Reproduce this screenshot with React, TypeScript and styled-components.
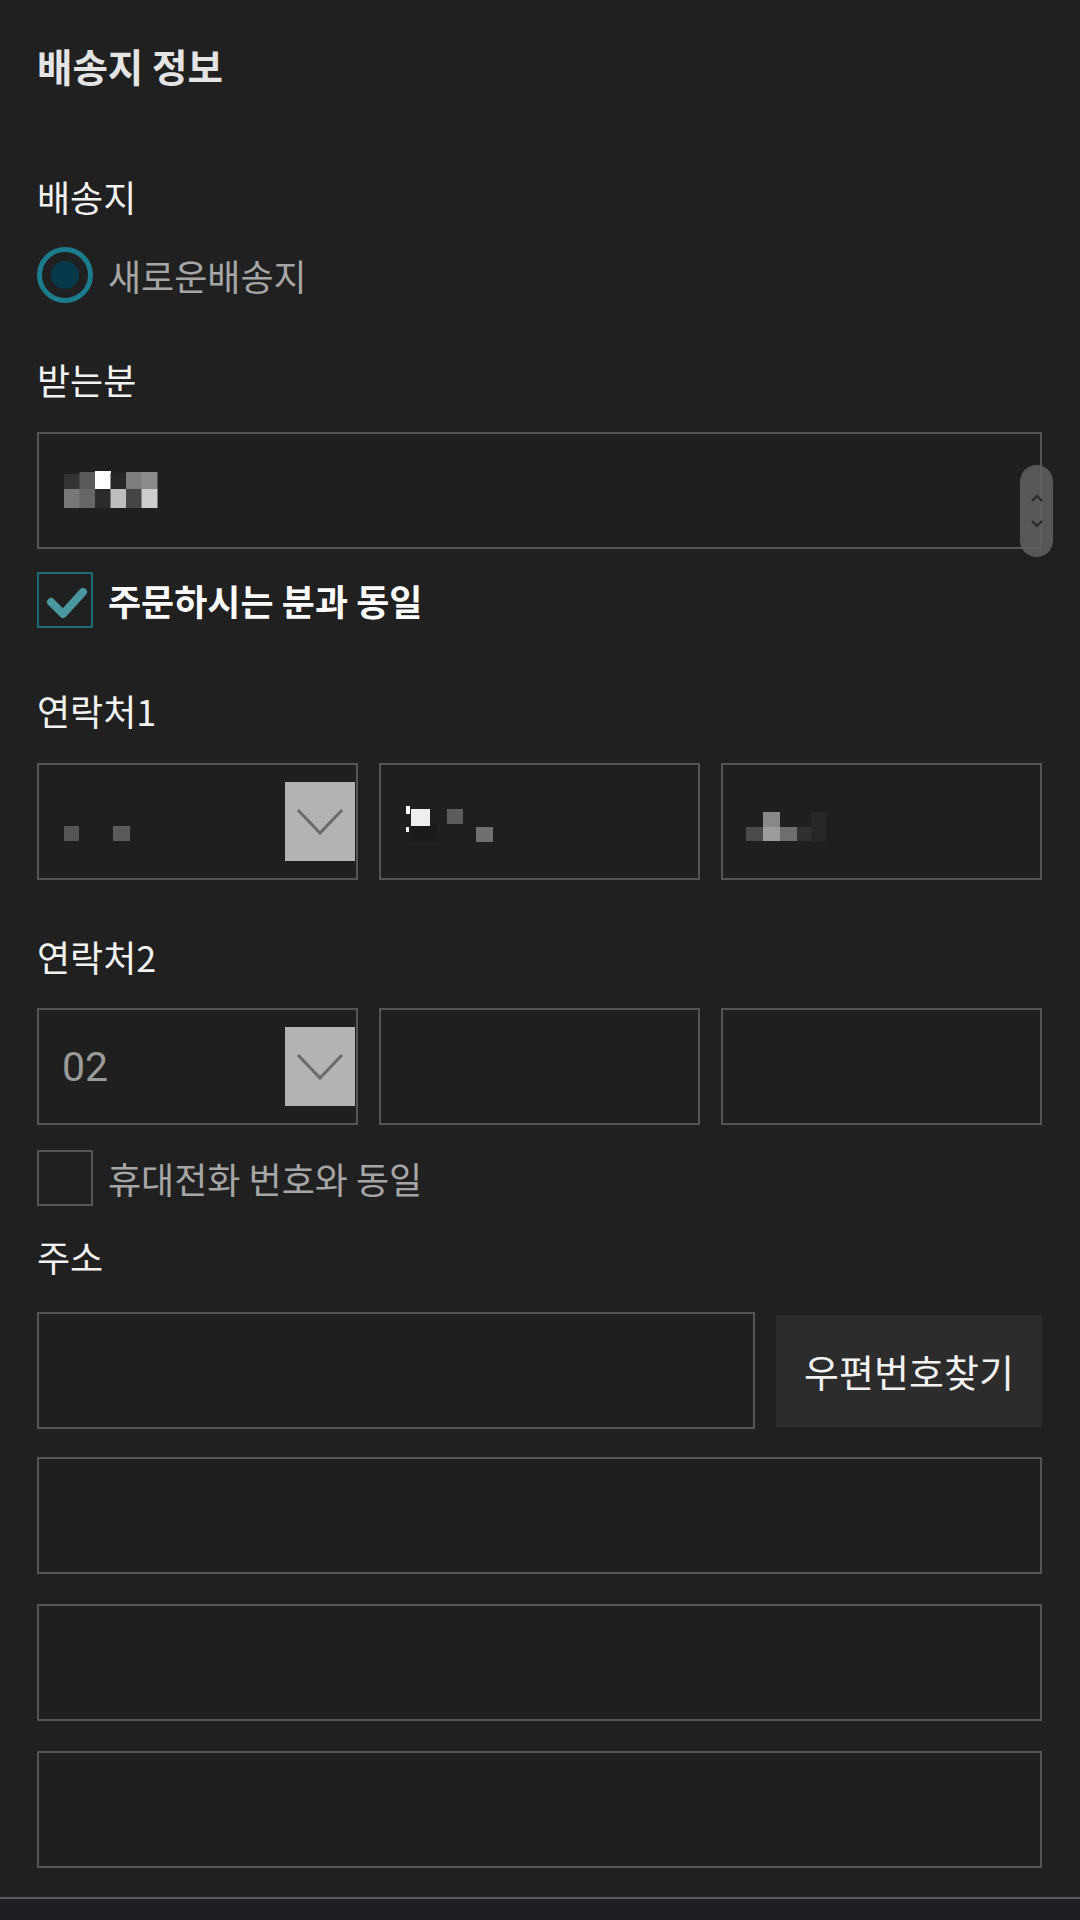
import React from "react";
import styled, { createGlobalStyle } from "styled-components";

const GlobalStyle = createGlobalStyle`
  html, body { margin: 0; padding: 0; background: #1e1f23; }
  body { font-family: "Noto Sans CJK KR", "Noto Sans", sans-serif; -webkit-font-smoothing: antialiased; }
  * { box-sizing: border-box; }
`;

const Page = styled.main`
  display: flex;
  flex-direction: column;
  background: #202020;
  border-bottom: 2px solid #5a5a5a;
  padding: 41px 38px 29px 37px;
`;

const Title = styled.h1`
  margin: 0;
  font-size: 38.5px;
  line-height: 49px;
  font-weight: 700;
  color: #e4e4e4;
`;

const Label = styled.div<{ $mt: number }>`
  margin-top: ${(p) => p.$mt}px;
  font-size: 36px;
  line-height: 48px;
  color: #f2f2f2;
`;

const OptionRow = styled.div<{ $mt: number }>`
  margin-top: ${(p) => p.$mt}px;
  display: flex;
  align-items: center;
  gap: 15px;
  height: 56px;
`;

const OptionText = styled.span<{ $strong?: boolean }>`
  font-size: 36px;
  line-height: 48px;
  font-weight: ${(p) => (p.$strong ? 700 : 400)};
  color: ${(p) => (p.$strong ? "#fafafa" : "#a6a6a6")};
`;

const RadioRing = styled.span`
  width: 56px;
  height: 56px;
  border-radius: 50%;
  border: 5px solid #1b7c8d;
  display: flex;
  align-items: center;
  justify-content: center;
  flex: none;
`;

const RadioDot = styled.span`
  width: 28px;
  height: 28px;
  border-radius: 50%;
  background: #07394a;
`;

const CheckBox = styled.span<{ $checked?: boolean }>`
  width: 56px;
  height: 56px;
  border: 2px solid ${(p) => (p.$checked ? "#1d6a72" : "#555555")};
  display: flex;
  align-items: center;
  justify-content: center;
  flex: none;
`;

const Box = styled.div<{ $mt?: number; $pl?: number }>`
  position: relative;
  margin-top: ${(p) => p.$mt ?? 0}px;
  height: 117px;
  border: 2px solid #555555;
  background: #1f1f1f;
  display: flex;
  align-items: center;
  justify-content: space-between;
  padding-left: ${(p) => p.$pl ?? 25}px;
  padding-right: 1px;
  min-width: 0;
`;

const ThreeCols = styled.div<{ $mt: number }>`
  margin-top: ${(p) => p.$mt}px;
  display: grid;
  grid-template-columns: repeat(3, 1fr);
  gap: 21px;
`;

const AddressRow = styled.div<{ $mt: number }>`
  margin-top: ${(p) => p.$mt}px;
  display: grid;
  grid-template-columns: 1fr 266px;
  gap: 21px;
  align-items: center;
`;

const ZipButton = styled.button`
  height: 112px;
  border: none;
  background: #2c2c2c;
  color: #f2f2f2;
  font-family: inherit;
  font-size: 38px;
  line-height: 48px;
  padding: 0;
`;

const SelectValue = styled.span`
  font-family: Roboto, "Noto Sans", sans-serif;
  font-size: 41px;
  color: #9a9a9a;
  margin-left: -2px;
`;

const ArrowBox = styled.span`
  width: 70px;
  height: 79px;
  background: #b3b3b3;
  display: flex;
  align-items: center;
  justify-content: center;
  flex: none;
`;

const ScrollPill = styled.div`
  position: absolute;
  right: -13px;
  top: 31px;
  width: 33px;
  height: 92px;
  border-radius: 17px;
  background: rgba(98, 98, 98, 0.85);
  display: flex;
  flex-direction: column;
  align-items: center;
  justify-content: center;
  gap: 16px;
`;

type Cell = [number, number, number, number, string];

const Mosaic = ({ cells, w, h }: { cells: Cell[]; w: number; h: number }) => (
  <svg width={w} height={h} viewBox={`0 0 ${w} ${h}`} style={{ display: "block", filter: "blur(0.6px)" }}>
    {cells.map(([x, y, cw, ch, c], i) => (
      <rect key={i} x={x} y={y} width={cw} height={ch} fill={c} />
    ))}
  </svg>
);

const MosaicSlot = styled.div`
  flex: 1;
  display: flex;
  align-items: center;
`;

const nameCells: Cell[] = [
  [0, 3, 16, 16, "#333333"],
  [15.5, 1, 16, 18, "#5a5a5a"],
  [31, 0, 16, 18, "#ffffff"],
  [46.5, 2, 16, 16, "#262626"],
  [62, 1, 16, 18, "#7d7d7d"],
  [77.5, 1, 16, 18, "#8a8a8a"],
  [0, 18, 16, 19, "#777777"],
  [15.5, 18, 16, 19, "#666666"],
  [31, 18, 16, 19, "#2b2b2b"],
  [46.5, 18, 16, 19, "#bdbdbd"],
  [62, 18, 16, 19, "#454545"],
  [77.5, 18, 16, 19, "#cdcdcd"],
];

const phone1Cells: Cell[] = [
  [0, 26, 15, 15, "#555555"],
  [49, 26, 17, 15, "#5a5a5a"],
];

const phone2Cells: Cell[] = [
  [0, 6, 4, 8, "#ffffff"],
  [0, 27, 3, 5, "#f0f0f0"],
  [5, 9, 19, 17, "#eeeeee"],
  [5, 26, 26, 15, "#1a1a1a"],
  [41, 9, 16, 15, "#5c5c5c"],
  [70, 27, 17, 15, "#707070"],
];

const phone3Cells: Cell[] = [
  [0, 27, 17, 14, "#4a4a4a"],
  [17, 12, 17, 15, "#888888"],
  [17, 27, 17, 14, "#9c9c9c"],
  [34, 27, 17, 14, "#6e6e6e"],
  [51, 27, 14, 14, "#303030"],
  [65, 12, 15, 29, "#272727"],
];

const Chevron = () => (
  <svg width="48" height="28" viewBox="0 0 48 28">
    <polyline points="2,2 24,25 46,2" fill="none" stroke="#6b6b6b" strokeWidth="3" />
  </svg>
);

const CheckMark = () => (
  <svg width="52" height="52" viewBox="0 0 52 52">
    <polyline points="12,28 24,40 44,18" fill="none" stroke="#4b979f" strokeWidth="8" strokeLinecap="round" strokeLinejoin="round" />
  </svg>
);

const SmallChevron = ({ up }: { up?: boolean }) => (
  <svg width="14" height="9" viewBox="0 0 14 9">
    <polyline points={up ? "2,7 7,2 12,7" : "2,2 7,7 12,2"} fill="none" stroke="#2a2a2a" strokeWidth="2" />
  </svg>
);

export default function App() {
  return (
    <>
      <GlobalStyle />
      <Page>
        <Title>배송지 정보</Title>

        <Label $mt={82}>배송지</Label>
        <OptionRow $mt={27}>
          <RadioRing>
            <RadioDot />
          </RadioRing>
          <OptionText>새로운배송지</OptionText>
        </OptionRow>

        <Label $mt={52}>받는분</Label>
        <Box $mt={29}>
          <MosaicSlot>
            <Mosaic cells={nameCells} w={96} h={40} />
          </MosaicSlot>
          <ScrollPill>
            <SmallChevron up />
            <SmallChevron />
          </ScrollPill>
        </Box>
        <OptionRow $mt={23}>
          <CheckBox $checked>
            <CheckMark />
          </CheckBox>
          <OptionText $strong>주문하시는 분과 동일</OptionText>
        </OptionRow>

        <Label $mt={58}>연락처1</Label>
        <ThreeCols $mt={29}>
          <Box>
            <MosaicSlot>
              <Mosaic cells={phone1Cells} w={70} h={44} />
            </MosaicSlot>
            <ArrowBox>
              <Chevron />
            </ArrowBox>
          </Box>
          <Box>
            <MosaicSlot>
              <Mosaic cells={phone2Cells} w={90} h={44} />
            </MosaicSlot>
          </Box>
          <Box $pl={23}>
            <MosaicSlot>
              <Mosaic cells={phone3Cells} w={82} h={44} />
            </MosaicSlot>
          </Box>
        </ThreeCols>

        <Label $mt={52}>연락처2</Label>
        <ThreeCols $mt={28}>
          <Box>
            <SelectValue>02</SelectValue>
            <ArrowBox>
              <Chevron />
            </ArrowBox>
          </Box>
          <Box />
          <Box />
        </ThreeCols>
        <OptionRow $mt={25}>
          <CheckBox />
          <OptionText>휴대전화 번호와 동일</OptionText>
        </OptionRow>

        <Label $mt={26}>주소</Label>
        <AddressRow $mt={32}>
          <Box />
          <ZipButton>우편번호찾기</ZipButton>
        </AddressRow>
        <Box $mt={28} />
        <Box $mt={30} />
        <Box $mt={30} />
      </Page>
    </>
  );
}
